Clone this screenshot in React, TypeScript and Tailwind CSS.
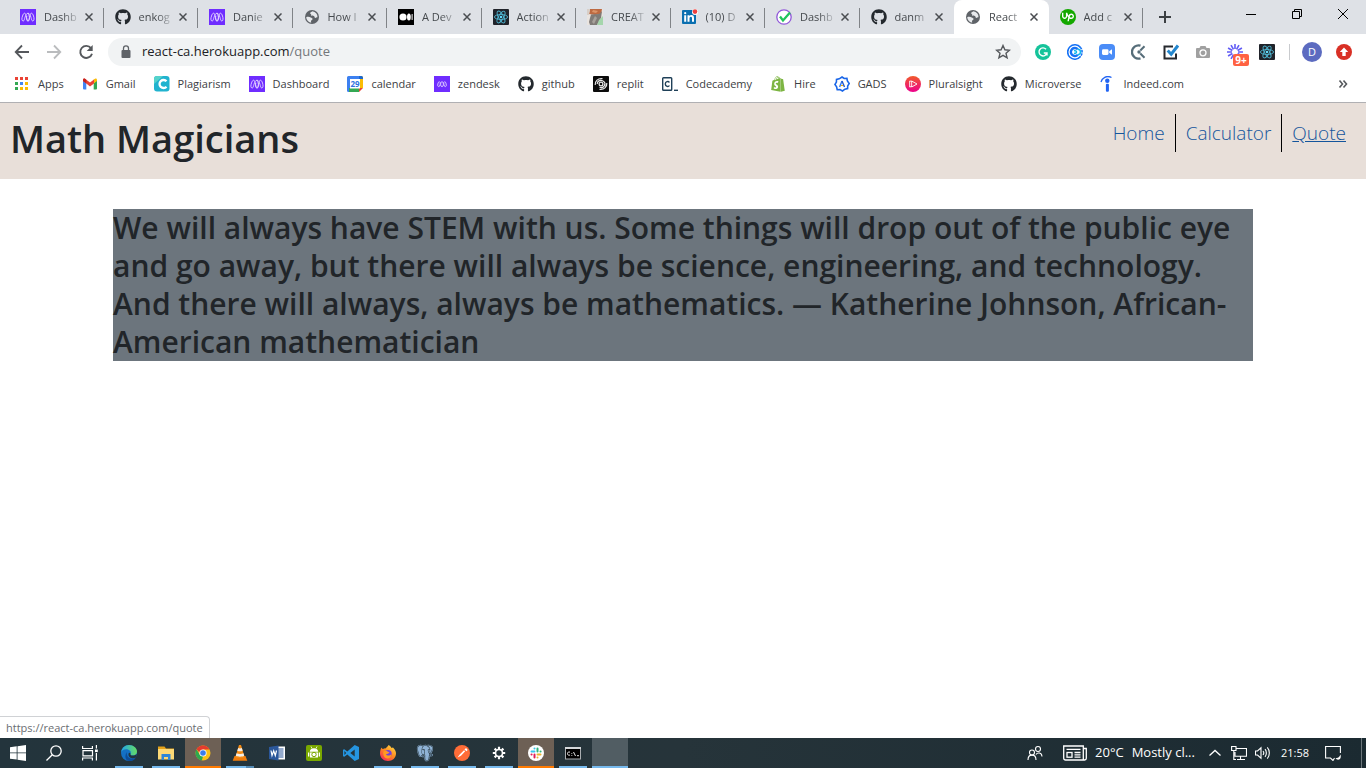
import React from 'react';
import { FaGithub, FaShopify } from 'react-icons/fa';
import { SiUpwork } from 'react-icons/si';
import { BiLogoPostgresql } from 'react-icons/bi';

type IconProps = { className?: string };

function Svg({ children, className = 'size-4', box = '0 0 16 16' }: { children: React.ReactNode; className?: string; box?: string }) {
  return (
    <svg viewBox={box} className={`${className} shrink-0`} fill="none" aria-hidden="true">
      {children}
    </svg>
  );
}

/* ---------- Favicons ---------- */

const Microverse = () => (
  <Svg>
    <rect width="16" height="16" fill="#6f2dff" />
    <g stroke="#e6d8ff" strokeWidth=".9">
      <path d="M3.300 12C1.300 12 1.800 9 2.500 7S3.700 4.200 4.700 4.200c1.700 0 1.900 7.800 3.500 7.800 1.500 0 1.600-3 .9-5.200S7.900 4.200 8 4.200" />
      <path d="M3.300 12c1.600 0 1.600-7.800 4.700-7.800S11 12 12.700 12s1.500-3 .8-5-1.200-2.800-2.200-2.800C9.600 4.200 9.400 12 7.800 12c-1.500 0-1.600-3-.9-5.200" />
    </g>
  </Svg>
);
const MicroverseSmall = () => (
  <Svg>
    <rect width="16" height="16" fill="#6f2dff" />
    <g stroke="#d9c6ff" strokeWidth=".9">
      <ellipse cx="5" cy="8.200" rx="1.200" ry="2.500" transform="rotate(12 5 8.200)" />
      <ellipse cx="8" cy="8.200" rx="1.400" ry="2.500" />
      <ellipse cx="11" cy="8.200" rx="1.200" ry="2.500" transform="rotate(-12 11 8.200)" />
    </g>
  </Svg>
);
const Github = () => <FaGithub className="size-4 shrink-0 text-[#24292e]" />;
const Globe = () => (
  <Svg>
    <circle cx="8" cy="8" r="7" fill="#5f6368" />
    <path d="M8.500 2.300c-.8.700-2.300.6-2.300 1.900 0 .9 1 .7 1 1.600 0 1.300 1.900.5 2.800 1.300.8.800.2 1.600 1.300 1.800.9.100 1.500-.9 2.200-.6A5.800 5.800 0 0 0 8.500 2.300ZM2.200 8.300c1.300-.8 3.400-.5 4.500.2.900.6 1.900.6 1.900 1.600s-1.300.9-1.500 1.800c-.2.800-.2 1.400.5 1.900a5.700 5.700 0 0 1-5.400-5.500Z" fill="#e8eaed" />
  </Svg>
);
const Medium = () => (
  <Svg>
    <rect width="16" height="16" fill="#000" />
    <circle cx="5" cy="8" r="3.600" fill="#fff" />
    <ellipse cx="10.900" cy="8" rx="1.900" ry="3.500" fill="#fff" />
    <rect x="13.600" y="5" width="1" height="6" rx=".5" fill="#fff" />
  </Svg>
);
const ReactMark = () => (
  <Svg>
    <rect width="16" height="16" rx="1" fill="#20232a" />
    <g stroke="#4fb4cf" strokeWidth=".9">
      <ellipse cx="8" cy="8" rx="6.600" ry="2.500" />
      <ellipse cx="8" cy="8" rx="6.600" ry="2.500" transform="rotate(60 8 8)" />
      <ellipse cx="8" cy="8" rx="6.600" ry="2.500" transform="rotate(120 8 8)" />
    </g>
    <circle cx="8" cy="8" r="1.300" fill="#61dafb" />
  </Svg>
);
const Portrait = () => (
  <Svg>
    <rect width="16" height="16" fill="#e9e4e0" />
    <path d="M3 0h12l-1 5-6 1-6-1Z" fill="#bd6a42" />
    <path d="M0 0h3l-1 6H0Z" fill="#d8cfc8" />
    <path d="M4 5.500 12 5l3-3-1 7-4 7H3l-1-3 1-4Z" fill="#807b77" />
    <path d="m8 7 2 2-3 6-2-2Z" fill="#a7a19b" />
    <path d="m12 11 4-4v9h-6Z" fill="#a5d6ac" />
    <path d="m6 1 5 1-2 2-4-1Z" fill="#dc9468" />
  </Svg>
);
const Linkedin = () => (
  <Svg>
    <rect x="0" y="1" width="14" height="14" rx="1" fill="#0a6fb0" />
    <path d="M2.200 6.200h2v6.600h-2ZM5.500 6.200h1.900v.9c.4-.7 1.100-1.100 2-1.100 2 0 2.600 1.200 2.600 3.200v3.600h-2V9.500c0-1-.2-1.700-1.100-1.700-1 0-1.400.7-1.400 1.700v3.300h-2Z" fill="#fff" />
    <circle cx="3.200" cy="4.200" r="1.100" fill="#fff" />
    <circle cx="13" cy="3" r="3" fill="#fff" />
    <circle cx="13" cy="2.600" r="2.300" fill="#f0413e" />
  </Svg>
);
const CheckRing = () => (
  <Svg>
    <circle cx="8" cy="8" r="7.200" stroke="#9158d9" strokeWidth="1.300" fill="#fff" />
    <path d="m4 7.500 3 4 7-8" stroke="#21c45c" strokeWidth="2.300" />
  </Svg>
);
const Upwork = () => (
  <span className="flex size-4 shrink-0 items-center justify-center rounded-full bg-[#14a800]">
    <SiUpwork className="size-3 text-white" />
  </span>
);

/* ---------- Bookmarks ---------- */

const Apps = () => (
  <Svg>
    {['#ea4335', '#ea4335', '#ea4335', '#34a853', '#4285f4', '#fbbc04', '#34a853', '#fbbc04', '#fbbc04'].map((c, i) => (
      <rect key={i} x={1 + (i % 3) * 5} y={1 + Math.floor(i / 3) * 5} width="3" height="3" fill={c} />
    ))}
  </Svg>
);
const Gmail = () => (
  <Svg>
    <path d="M1 4.500 4.300 7v6.500H2a1 1 0 0 1-1-1Z" fill="#4285f4" />
    <path d="M11.700 7 15 4.500v8a1 1 0 0 1-1 1h-2.300Z" fill="#34a853" />
    <path d="M11.700 3.500 13 2.800c1-.7 2 0 2 1.200v1L11.700 7.500Z" fill="#fbbc04" />
    <path d="M1 5V4c0-1.200 1.100-1.900 2-1.200L8 6.500l4-3v4l-4 3-3.700-3Z" fill="#ea4335" />
    <path d="M1 5V4c0-1.200 1.100-1.900 2-1.200l1.300 1v3.700Z" fill="#c5221f" />
  </Svg>
);
const Plagiarism = () => (
  <Svg>
    <rect width="15.500" height="15.500" rx="3" fill="#21b3cf" />
    <path d="M0 3a3 3 0 0 1 3-3h6L0 8Z" fill="#56d3cb" />
    <path d="M12.500 5.300A4 4 0 1 0 12.500 10.700" stroke="#fff" strokeWidth="2.300" />
  </Svg>
);
const Calendar = () => (
  <Svg>
    <path d="M0 1.500A1.500 1.500 0 0 1 1.500 0H13v4H4v12H1.500A1.500 1.500 0 0 1 0 14.500Z" fill="#3c80f0" />
    <path d="M12 0h2.500A1.500 1.500 0 0 1 16 1.500V12h-4Z" fill="#fbbc04" />
    <path d="M12 0h2.500A1.500 1.500 0 0 1 16 1.500V3h-4Z" fill="#1967d2" />
    <path d="M2 12h10v4H2Z" fill="#34a853" />
    <path d="m12 16 4-4h-4Z" fill="#ea4335" />
    <rect x="3" y="3" width="10" height="9.500" fill="#fff" />
    <text x="8" y="11" textAnchor="middle" fontSize="8" fontWeight="700" fill="#2f72e0" fontFamily="Open Sans, sans-serif">29</text>
  </Svg>
);
const Replit = () => (
  <Svg>
    <rect width="16" height="16" rx="1" fill="#0c0c0c" />
    <g stroke="#e8e8e8" strokeWidth="1.200">
      <circle cx="8" cy="8" r="1.900" />
      <path d="M2.200 9C1.800 5 5 2 9.500 2.700M4.200 8C4.200 5 7 3.800 9.500 4.700c2.500 1 2.800 3.300 2.300 5M13.800 7c.4 4-2.800 7-7.300 6.300M11.800 8c0 3-2.800 4.200-5.300 3.300" />
    </g>
  </Svg>
);
const Codecademy = () => (
  <Svg>
    <rect x=".7" y="1.700" width="9" height="12.600" rx=".8" stroke="#1f4058" strokeWidth="1.400" />
    <path d="M7.400 6.500C6.500 5 3.300 5.300 3.300 8s3.200 3 4.100 1.500" stroke="#1f4058" strokeWidth="1.400" />
    <path d="M12 14.300h4" stroke="#1f4058" strokeWidth="1.400" />
  </Svg>
);
const Shopify = () => <FaShopify className="size-4 shrink-0 text-[#7db543]" />;
const Gads = () => (
  <Svg>
    <path d="m8 1 2.200 1.500 2.700-.1.500 2.600L15.200 7.500l-1.500 2.400-.1 2.700-2.700.6L8.500 15l-2.500-1.400-2.800.1-.6-2.800L.9 8.500l1.500-2.400.1-2.700 2.700-.6Z" stroke="#1a66e8" strokeWidth="1.600" />
    <path d="m5.600 11 2.400-6" stroke="#3479ef" strokeWidth="1.400" />
    <path d="m8 5 2.500 6" stroke="#2458c9" strokeWidth="1.400" />
    <path d="M7 9.500h2" stroke="#f4b400" strokeWidth="1.200" />
  </Svg>
);
const Pluralsight = () => (
  <Svg>
    <defs>
      <linearGradient id="ps" x1="0" y1="0" x2="0" y2="1">
        <stop stopColor="#f15b2a" />
        <stop offset="1" stopColor="#ec008c" />
      </linearGradient>
    </defs>
    <circle cx="8" cy="8" r="8" fill="url(#ps)" />
    <path d="m6.700 5 5.300 3-5.300 3ZM6.700 5.300 4.700 5v6l2-.6" stroke="#fff" strokeWidth=".9" />
  </Svg>
);
const Indeed = () => (
  <Svg>
    <path d="M2 6C3 2 7.500-1 12.500 1.500" stroke="#2164f3" strokeWidth="1.300" />
    <circle cx="8.300" cy="4.700" r="2.200" fill="#2164f3" />
    <rect x="6.900" y="7.800" width="3" height="8" rx="1" fill="#2164f3" />
  </Svg>
);

/* ---------- Extensions ---------- */

const Grammarly = () => (
  <Svg>
    <circle cx="8" cy="8" r="8" fill="#15c39a" />
    <path d="M11 5.200A4 4 0 1 0 11.900 9H8.800M12 9v2.500" stroke="#fff" strokeWidth="1.400" />
  </Svg>
);
const Calendly = () => (
  <Svg>
    <path d="M13.500 3.500A7.200 7.200 0 1 0 13.500 12.500" stroke="#1672f5" strokeWidth="1.600" />
    <path d="M13.200 3.200c2.500 2.600 2.500 7 0 9.600" stroke="#1672f5" strokeWidth="1.600" strokeDasharray="2.500 .8" />
    <path d="M10.800 5.300A4 4 0 1 0 10.800 10.700" stroke="#1672f5" strokeWidth="2.400" />
    <path d="M10.500 5.300c2.200 0 3 1.700 3 2.700s-.8 2.700-3 2.700M7 6.800c1.500-.5 2.500.2 2.500 1.200S8.500 9.700 7 9.200" stroke="#13b9ec" strokeWidth="1.500" />
  </Svg>
);
const Zoom = () => (
  <Svg>
    <rect width="16" height="16" rx="4" fill="#4a8cf7" />
    <rect x="3" y="5.200" width="6.500" height="5.700" rx="1.300" fill="#fff" />
    <path d="m10.200 7.300 2.800-2v5.500l-2.800-2Z" fill="#fff" />
  </Svg>
);
const Clockify = () => (
  <Svg>
    <path d="M9.500 1.700A6.600 6.600 0 1 0 9.500 14.300" stroke="#566d79" strokeWidth="2.300" />
    <path d="m9.300 6.500 4.200-4.300M9.300 9.500l4.200 4.300" stroke="#566d79" strokeWidth="2" />
    <circle cx="8" cy="8" r="1.700" fill="#566d79" />
  </Svg>
);
const CheckSquare = () => (
  <Svg>
    <path d="M10 2.500H1.500v12H13v-5" stroke="#26292e" strokeWidth="2" />
    <path d="m4.700 6.500 3.500 3.700L15 1.500" stroke="#2387cf" strokeWidth="3" />
  </Svg>
);
const Camera = () => (
  <Svg>
    <path d="M5.500 2h5l1 2H14a1 1 0 0 1 1 1v8a1 1 0 0 1-1 1H2a1 1 0 0 1-1-1V5a1 1 0 0 1 1-1h2.500Z" fill="#a0a0a0" />
    <circle cx="8" cy="8.800" r="3" stroke="#fff" strokeWidth="1.300" />
  </Svg>
);
const Loom = () => (
  <span className="relative flex">
    <Svg>
      <g stroke="#625df5" strokeWidth="1.600">
        {[0, 30, 60, 90, 120, 150].map((a) => (
          <path key={a} d="M8 0v5M8 11v5" transform={`rotate(${a} 8 8)`} />
        ))}
      </g>
    </Svg>
    <span className="absolute top-2.5 left-1.5 flex h-3 w-4 items-center justify-center rounded-xs bg-[#ff6242] text-[10px] leading-3 font-bold text-white">9+</span>
  </span>
);

/* ---------- Taskbar icons ---------- */

const Start = () => (
  <Svg>
    <path d="M0 2.300 6.700 1.300v6.200H0ZM7.500 1.200 16 0v7.500H7.500ZM0 8.300h6.700v6.300L0 13.700ZM7.500 8.300H16V16l-8.500-1.200Z" fill="#fff" />
  </Svg>
);
const Search = () => (
  <Svg>
    <circle cx="10" cy="6" r="5.200" stroke="#fff" strokeWidth="1.300" />
    <path d="M6.300 9.700.5 15.500" stroke="#fff" strokeWidth="1.300" />
  </Svg>
);
const TaskView = () => (
  <Svg>
    <path d="M.6 1v2.500h9.800V1M.6 15.500V13h9.800v2.500M1 5.600h9.500v5.300H1ZM14.400 0v3.500M14.400 8v7.500" stroke="#fff" strokeWidth="1.200" />
    <rect x="13" y="4.500" width="2.800" height="2.600" fill="#fff" />
  </Svg>
);
const Edge = () => (
  <Svg>
    <defs>
      <linearGradient id="edge-top" x1="0" x2="1">
        <stop stopColor="#22a6e8" />
        <stop offset="1" stopColor="#66dd62" />
      </linearGradient>
    </defs>
    <circle cx="8" cy="8" r="8" fill="#1470c4" />
    <path d="M.1 7.500C.6 3 4 0 8 0c4.500 0 8 3 8 6.500 0 2.500-1.800 4-4.300 4-2 0-2.700-.8-2.100-1.600C10.800 6.500 8 4.300 5.200 4.300 3 4.300.8 5.500.1 7.500Z" fill="url(#edge-top)" />
    <path d="M6 7c-1 4 2 7 5.500 6.600 1.500-.2 2.800-.7 3.500-1.200C13.500 15 11 16 8.500 16 4.500 16 3 11 6 7Z" fill="#0d4c98" />
    <path d="M9.600 8.900c-.6.800.1 1.600 2.100 1.600 1.600 0 2.900-.5 3.700-1.600.5 1.500 0 3-.5 3.600-3.500 1.800-8.300.2-7.300-4 .4-1 1.400-1 2 .4Z" fill="#23343c" />
  </Svg>
);
const Folder = () => (
  <Svg>
    <path d="M0 1.500h6.500L8 3.500h8V7H0Z" fill="#e3a21a" />
    <rect y="4" width="16" height="10.500" fill="#fcd976" />
    <path d="M3.500 15V9h9v6H10v-3H6v3Z" fill="#2d86d8" />
  </Svg>
);
const Chrome = () => (
  <Svg>
    <circle cx="8" cy="8" r="7.500" fill="#fbc116" />
    <path d="M1.500 4.200 5 10l3 1.500-1.200 3.900A7.500 7.500 0 0 1 1.500 4.200Z" fill="#2da94f" />
    <path d="M1.500 4.200A7.500 7.500 0 0 1 14.500 4.500H8L4.500 7.500Z" fill="#e33b2e" />
    <circle cx="8" cy="8" r="3.600" fill="#fff" />
    <circle cx="8" cy="8" r="2.800" fill="#3b7ded" />
  </Svg>
);
const Vlc = () => (
  <Svg>
    <path d="M2.500 11h11l1.800 4.700H.7Z" fill="#f07c0c" />
    <path d="M7 0h2l3.600 12c-1.500 1.500-7.700 1.500-9.200 0Z" fill="#f58c14" />
    <path d="m6.200 3-.9 2.800c1.500.7 3.900.7 5.400 0L9.800 3c-1 .5-2.600.5-3.600 0ZM4.500 8.300l-.7 2.500c2 1.200 6.400 1.200 8.400 0l-.7-2.500c-1.700 1-5.300 1-7 0Z" fill="#f3eee8" />
  </Svg>
);
const Word = () => (
  <Svg>
    <path d="M8 1.500h8v13H8Z" fill="#fff" />
    <path d="M9 4h5.500M9 6h5.500M9 8h5.500M9 10h5.500M9 12h5.500" stroke="#2b579a" strokeWidth="1" />
    <path d="M0 2 9.500.5v15L0 14Z" fill="#2b579a" />
    <path d="m2 5.500 1 5 1.700-4.700 1.600 4.700 1.200-5" stroke="#fff" strokeWidth="1.200" />
  </Svg>
);
const Android = () => (
  <Svg>
    <rect width="16" height="16" rx="2" fill="#7aa800" />
    <path d="M3.700 6.800C4 4.300 5.700 3.300 8 3.300s4 1 4.300 3.500ZM4 7.500h8v5H4ZM2 7.500h1.300v4H2ZM12.700 7.500H14v4h-1.300Z" fill="#fff" />
    <path d="m5 1.500 1 2M11 1.500l-1 2" stroke="#fff" strokeWidth=".8" />
    <circle cx="8" cy="9.500" r="2.200" stroke="#7aa800" strokeWidth="1" />
  </Svg>
);
const VsCode = () => (
  <Svg>
    <path d="M11.700 0 16 1.900v12.200L11.700 16 4.300 9.500l-3 2.300L0 11.200V4.800l1.300-.6 3 2.300ZM11.700 4.500 7.300 8l4.400 3.500ZM1.400 6.100v3.800L3.200 8Z" fill="#2595e0" fillRule="evenodd" />
  </Svg>
);
const Firefox = () => (
  <Svg>
    <defs>
      <linearGradient id="fx" x1=".9" y1="0" x2=".2" y2="1">
        <stop stopColor="#ffe14a" />
        <stop offset=".5" stopColor="#ff8a1f" />
        <stop offset="1" stopColor="#f5245c" />
      </linearGradient>
    </defs>
    <path d="M1.500 2.500c.3.900.7 1.300 1.500 1.500 1-.6 2-.8 2.800-.6C6.500 2 8 1.500 8.500 0c2 1 2.500 2 3 3l1.500-.5C15 4.500 16 6.500 16 8.500 16 13 12.500 16 8 16S0 12.500 0 8.500C0 6 .5 4 1.500 2.500Z" fill="url(#fx)" />
    <circle cx="8" cy="8.800" r="3.700" fill="#7540d8" />
    <path d="M3.500 6.500c2-1.500 3.500-.5 4.500.2l1.500.8C8.500 9 7 8.500 6 9.500c1 1.500 4 1.500 5.500-.5-.2 3-2 4.500-4 4.500C4.500 13.500 2.500 10 3.500 6.500Z" fill="#ff9a22" />
  </Svg>
);
const Postgres = () => <BiLogoPostgresql className="size-5 shrink-0 text-[#8fb3d6]" />;
const Postman = () => (
  <Svg>
    <circle cx="8" cy="8" r="8" fill="#ff6c37" />
    <path d="m3.500 12.500 2.200-3L10 5.200l1.200 1.100L7 10.700ZM10.500 4.500a1.500 1.500 0 1 1 2 1.700Z" fill="#fff" />
  </Svg>
);
const Gear = () => (
  <Svg>
    <g stroke="#fff">
      <path d="M8 1.800v2.400M8 11.800v2.400M1.800 8h2.400M11.800 8h2.400M3.600 3.600l1.700 1.700M10.700 10.700l1.700 1.700M12.400 3.600l-1.700 1.700M5.300 10.700l-1.700 1.700" strokeWidth="2.200" />
      <circle cx="8" cy="8" r="3.500" strokeWidth="1.600" />
    </g>
  </Svg>
);
const Slack = () => (
  <Svg>
    <circle cx="8" cy="8" r="8" fill="#fff" />
    <g strokeWidth="2" strokeLinecap="round">
      <path d="M6.500 3.500v.1M3.500 6.500h3" stroke="#36c5f0" />
      <path d="M9.500 3.500v3M12.500 6.500h.1" stroke="#2eb67d" />
      <path d="M9.500 9.500h3M9.500 12.500v.1" stroke="#ecb22e" />
      <path d="M6.500 9.500v3M3.500 9.500h.1" stroke="#e01e5a" />
    </g>
  </Svg>
);
const Terminal = () => (
  <Svg>
    <rect x=".5" y="2.500" width="15" height="11.500" fill="#000" stroke="#a9adb0" />
    <path d="M0 3h16" stroke="#d5d8da" strokeWidth="2" />
    <path d="M5 7.200c-1.500-.8-2.500.2-2.500 1.400s1 2.200 2.500 1.400M6.800 8v.8M6.800 10v.8M8.500 7l2 4M12 10.700h2" stroke="#fff" strokeWidth=".9" />
  </Svg>
);
const People = () => (
  <Svg>
    <circle cx="5" cy="7.500" r="2.500" stroke="#fff" strokeWidth="1.100" />
    <path d="M1 15c0-6.500 8-6.500 8 0M9 9.500c1.500-2.500 5.800-2 6 2" stroke="#fff" strokeWidth="1.100" />
    <circle cx="11" cy="4" r="2.500" stroke="#fff" strokeWidth="1.100" />
  </Svg>
);
const News = () => (
  <Svg className="h-4 w-6" box="0 0 24 16">
    <path d="M.7 1h19.600v14H2.500c-1 0-1.800-.8-1.800-1.700ZM20.300 3.500h3v9.800c0 1-.8 1.700-1.700 1.700h-2M3.500 4.300h14M11.500 7.500h6M11.500 9.800h6M11.500 12.100h6" stroke="#fff" strokeWidth="1.300" />
    <rect x="4" y="7.500" width="5" height="4.700" stroke="#fff" strokeWidth="1.300" />
  </Svg>
);
const Network = () => (
  <Svg>
    <path d="M5 3.500h10.500v7.800H4V7M9.500 11.300v3M6 14.500h8M.6 1.500H5v4H.6ZM2.800 5.500v9H5" stroke="#fff" strokeWidth="1.100" />
  </Svg>
);
const Volume = () => (
  <Svg>
    <path d="M.5 6h2L6 2.800v10.400L2.500 10h-2ZM8 6c.8 1 .8 3 0 4M10 4.200c1.800 2 1.800 5.600 0 7.600M12.300 2.300c2.700 3 2.700 8.400 0 11.400" stroke="#fff" strokeWidth="1.100" />
  </Svg>
);
const Notifications = () => (
  <Svg>
    <path d="M9.500 13 8 15.500 5.500 13H.6V1.500h14.800V8" stroke="#fff" strokeWidth="1.100" />
    <path d="M15.500 9.500c-1 3-3 3.500-5 3.700 1.500 2.500 6.500 2 5-3.700Z" fill="#fff" />
  </Svg>
);

/* ---------- Data ---------- */

type Item = { label: string; icon: React.ComponentType<IconProps> };

const tabs: Item[] = [
  { label: 'Dashb', icon: Microverse },
  { label: 'enkog', icon: Github },
  { label: 'Danie', icon: Microverse },
  { label: 'How I', icon: Globe },
  { label: 'A Dev', icon: Medium },
  { label: 'Action', icon: ReactMark },
  { label: 'CREAT', icon: Portrait },
  { label: '(10) D', icon: Linkedin },
  { label: 'Dashb', icon: CheckRing },
  { label: 'danm', icon: Github },
  { label: 'React', icon: Globe },
  { label: 'Add c', icon: Upwork },
];
const ACTIVE = 10;

const bookmarks: Item[] = [
  { label: 'Apps', icon: Apps },
  { label: 'Gmail', icon: Gmail },
  { label: 'Plagiarism', icon: Plagiarism },
  { label: 'Dashboard', icon: Microverse },
  { label: 'calendar', icon: Calendar },
  { label: 'zendesk', icon: MicroverseSmall },
  { label: 'github', icon: Github },
  { label: 'replit', icon: Replit },
  { label: 'Codecademy', icon: Codecademy },
  { label: 'Hire', icon: Shopify },
  { label: 'GADS', icon: Gads },
  { label: 'Pluralsight', icon: Pluralsight },
  { label: 'Microverse', icon: Github },
  { label: 'Indeed.com', icon: Indeed },
];

const extensions: Item[] = [
  { label: 'Grammarly', icon: Grammarly },
  { label: 'Calendly', icon: Calendly },
  { label: 'Zoom', icon: Zoom },
  { label: 'Clockify', icon: Clockify },
  { label: 'Tasks', icon: CheckSquare },
  { label: 'Screenshot', icon: Camera },
  { label: 'Loom', icon: Loom },
  { label: 'React Developer Tools', icon: ReactMark },
];

const taskbar: (Item & { state?: 'open' | 'stacked' | 'alert' | 'blank' })[] = [
  { label: 'Edge', icon: Edge, state: 'open' },
  { label: 'File Explorer', icon: Folder, state: 'open' },
  { label: 'Chrome', icon: Chrome, state: 'alert' },
  { label: 'VLC', icon: Vlc, state: 'stacked' },
  { label: 'Word', icon: Word },
  { label: 'Android', icon: Android },
  { label: 'Visual Studio Code', icon: VsCode },
  { label: 'Firefox', icon: Firefox, state: 'open' },
  { label: 'pgAdmin', icon: Postgres, state: 'open' },
  { label: 'Postman', icon: Postman, state: 'open' },
  { label: 'Settings', icon: Gear, state: 'open' },
  { label: 'Slack', icon: Slack, state: 'alert' },
  { label: 'Command Prompt', icon: Terminal, state: 'open' },
  { label: 'Window', icon: () => null, state: 'blank' },
];

const CloseX = () => (
  <Svg className="size-2" box="0 0 8 8">
    <path d="m.5.500 7 7M7.500.500l-7 7" stroke="#4a4d51" strokeWidth="1.500" />
  </Svg>
);

function TabStrip() {
  return (
    <div className="flex h-[34px] bg-[#dee1e6] pl-[9px]">
      <div role="tablist" className="flex w-full max-w-[1134px]">
        {tabs.map(({ label, icon: Icon }, i) => {
          const active = i === ACTIVE;
          return (
            <div
              key={i}
              className={`relative flex min-w-0 flex-1 items-center pr-[11px] pl-[11px] ${active ? 'rounded-t-lg bg-white' : ''}`}
            >
              <button role="tab" aria-selected={active} className="flex min-w-0 flex-1 items-center gap-2">
                <Icon />
                <span className="min-w-0 flex-1 text-left text-[11px] whitespace-nowrap text-[#45494d] [mask-image:linear-gradient(to_right,black_50%,transparent)]">
                  {label}
                </span>
              </button>
              <button aria-label={`Close ${label}`} className="ml-1 flex">
                <CloseX />
              </button>
              {!active && i !== ACTIVE - 1 && <span className="absolute top-2 right-0 h-5 w-px bg-[#808387]" />}
            </div>
          );
        })}
      </div>
      <button aria-label="New tab" className="flex w-11 shrink-0 items-center justify-center">
        <Svg className="size-3" box="0 0 12 12">
          <path d="M6 0v12M0 6h12" stroke="#3c4043" strokeWidth="2" />
        </Svg>
      </button>
      <div className="ml-auto flex h-7 shrink-0">
        <button aria-label="Minimize" className="flex w-[46px] items-center justify-center">
          <span className="h-px w-2.5 bg-black" />
        </button>
        <button aria-label="Restore" className="flex w-[46px] items-center justify-center">
          <Svg className="size-2.5" box="0 0 10 10">
            <path d="M.5 2.500h7v7h-7ZM2.500 2.500v-2h7v7h-2" stroke="#000" />
          </Svg>
        </button>
        <button aria-label="Close window" className="flex w-[46px] items-center justify-center">
          <Svg className="size-2.5" box="0 0 10 10">
            <path d="m0 0 10 10M10 0 0 10" stroke="#000" />
          </Svg>
        </button>
      </div>
    </div>
  );
}

function Toolbar() {
  return (
    <div className="flex h-9 items-center bg-white pl-[6px]">
      <div className="flex w-[102px] shrink-0">
        <button aria-label="Back" className="flex size-8 items-center justify-center">
          <Svg>
            <path d="M15 8H2M8 1.500 1.700 8 8 14.500" stroke="#55585c" strokeWidth="1.800" />
          </Svg>
        </button>
        <button aria-label="Forward" className="flex size-8 items-center justify-center">
          <Svg>
            <path d="M1 8h13M8 1.500 14.300 8 8 14.500" stroke="#babcbe" strokeWidth="1.800" />
          </Svg>
        </button>
        <button aria-label="Reload" className="flex size-8 items-center justify-center">
          <Svg>
            <path d="M13 4.200A6 6 0 1 0 14 9.700" stroke="#55585c" strokeWidth="1.900" />
            <path d="M14.700 1v6H8.700Z" fill="#55585c" />
          </Svg>
        </button>
      </div>
      <label className="relative flex h-7 min-w-0 flex-1 items-center rounded-full bg-[#f1f3f4] pr-[10px] pl-3 text-[13px]">
        <Svg className="mr-[10px] h-4 w-3" box="0 0 12 16">
          <rect x="1.500" y="6" width="9" height="8" rx="1" fill="#5f6368" />
          <path d="M3.500 6.500V4.300a2.500 2.500 0 0 1 5 0v2.200" stroke="#5f6368" strokeWidth="1.300" />
        </Svg>
        <span className="flex-1 text-[#73777b]">
          <span className="text-[#202124]">react-ca.herokuapp.com</span>/quote
        </span>
        <input aria-label="Address" className="absolute inset-0 rounded-full bg-transparent" />
        <Svg className="size-4">
          <path d="m8 1.500 1.900 4.300 4.600.4-3.500 3.100 1.100 4.600L8 11.400l-4.100 2.500L5 9.300 1.500 6.200l4.600-.4Z" stroke="#55585c" strokeWidth="1.400" />
        </Svg>
      </label>
      <div className="ml-[6px] flex shrink-0 items-center">
        {extensions.map(({ label, icon: Icon }) => (
          <button key={label} aria-label={label} className="flex size-8 items-center justify-center">
            <Icon />
          </button>
        ))}
        <span className="mx-[6px] h-4 w-px bg-[#c9cbce]" />
        <button className="flex w-8 justify-center">
          <span className="flex size-5 items-center justify-center rounded-full bg-[#5c6bc0] text-[11px] text-white">D</span>
        </button>
        <button aria-label="Update" className="mr-[6px] flex size-8 items-center justify-center">
          <Svg>
            <circle cx="8" cy="8" r="8" fill="#d93025" />
            <path d="m8 3.500 4.200 4.500H9.700v4H6.300V8H3.800Z" fill="#fff" />
          </Svg>
        </button>
      </div>
    </div>
  );
}

function Bookmarks() {
  return (
    <nav aria-label="Bookmarks" className="flex h-[33px] items-center border-b border-[#b0b0b3] bg-white pr-[18px] pb-1 pl-[14px] text-[11px] text-[#3c4043]">
      <div className="flex min-w-0 flex-1 items-center gap-[18px] overflow-hidden">
        {bookmarks.map(({ label, icon: Icon }) => (
          <a key={label} href="#" className="flex shrink-0 items-center gap-2">
            <Icon />
            {label}
          </a>
        ))}
      </div>
      <button aria-label="More bookmarks">
        <Svg className="size-2.5" box="0 0 10 10">
          <path d="m1.500 1.500 3 3.500-3 3.500M5.500 1.500l3 3.500-3 3.500" stroke="#55585c" strokeWidth="1.600" />
        </Svg>
      </button>
    </nav>
  );
}

function Page() {
  return (
    <main className="relative flex-1 bg-white text-[#212529]">
      <header className="flex h-[76px] items-start justify-between bg-[#e8dfd9] px-[10px] pt-[11px]">
        <h1 className="text-[38px] leading-[48px] font-semibold">Math Magicians</h1>
        <nav className="flex text-[19px] leading-[38px] font-light text-[#14559c]">
          <a href="#home" className="border-r border-black px-[10px]">Home</a>
          <a href="#calculator" className="border-r border-black px-[10px]">Calculator</a>
          <a href="#quote" className="px-[10px] underline">Quote</a>
        </nav>
      </header>
      <div className="mx-auto mt-[30px] max-w-[1140px] bg-[#6c757d]">
        <h2 className="text-[30px] leading-[38px] font-semibold">
          We will always have STEM with us. Some things will drop out of the public eye and go away, but there will always be
          science, engineering, and technology. And there will always, always be mathematics. — Katherine Johnson,
          African-American mathematician
        </h2>
      </div>
      <div className="absolute bottom-0 left-0 h-[22px] rounded-tr-sm border-t border-r border-[#d0d2d5] bg-white px-[6px] text-[11px] leading-[22px] text-[#6a6d71]">
        https://react-ca.herokuapp.com/quote
      </div>
    </main>
  );
}

function Taskbar() {
  return (
    <footer className="flex h-[30px] shrink-0 items-stretch bg-linear-to-r from-[#23343c] via-[#26343a] to-[#1b2a31] text-[13px] text-white">
      <div className="mr-[3px] flex">
        {[
          { label: 'Start', icon: Start },
          { label: 'Search', icon: Search },
          { label: 'Task View', icon: TaskView },
        ].map(({ label, icon: Icon }) => (
          <button key={label} aria-label={label} className="flex w-9 items-center justify-center">
            <Icon />
          </button>
        ))}
      </div>
      <div className="flex flex-1 gap-px">
        {taskbar.map(({ label, icon: Icon, state }) => (
          <button
            key={label}
            aria-label={label}
            className={`relative flex w-9 items-center justify-center ${state === 'alert' ? 'bg-[#6d6055]' : ''} ${state === 'blank' ? 'bg-[#515d63]' : ''}`}
          >
            <Icon />
            {state === 'alert' && <span className="absolute inset-x-0 bottom-0 h-0.5 bg-[#ff7a00]" />}
            {state === 'blank' && <span className="absolute inset-x-0 bottom-0 h-0.5 bg-[#76b9ed]" />}
            {state === 'open' && <span className="absolute inset-x-1 bottom-0 h-0.5 bg-[#76b9ed]" />}
            {state === 'stacked' && (
              <span className="absolute inset-x-1 bottom-0 h-0.5 border-r-8 border-[#5389b3] bg-[#76b9ed]" />
            )}
          </button>
        ))}
      </div>
      <div className="flex items-center">
        <button aria-label="People" className="mr-5 flex">
          <People />
        </button>
        <button className="mr-3 flex items-center gap-2">
          <News />
          <span>20°C</span>
          <span>Mostly cl...</span>
        </button>
        <button aria-label="Show hidden icons" className="mr-2 flex">
          <Svg>
            <path d="m2.500 10.500 5.500-5 5.500 5" stroke="#fff" strokeWidth="1.300" />
          </Svg>
        </button>
        <button aria-label="Network" className="mr-2 flex">
          <Network />
        </button>
        <button aria-label="Volume" className="mr-[10px] flex">
          <Volume />
        </button>
        <time className="mr-4 text-[11px]">21:58</time>
        <button aria-label="Notifications" className="mr-5 flex">
          <Notifications />
        </button>
        <span className="mr-1 h-[30px] w-px bg-[#6c767b]" />
      </div>
    </footer>
  );
}

export default function App() {
  return (
    <div className="flex min-h-screen flex-col bg-white font-['Open_Sans','Noto_Sans',sans-serif]">
      <TabStrip />
      <Toolbar />
      <Bookmarks />
      <Page />
      <Taskbar />
    </div>
  );
}
